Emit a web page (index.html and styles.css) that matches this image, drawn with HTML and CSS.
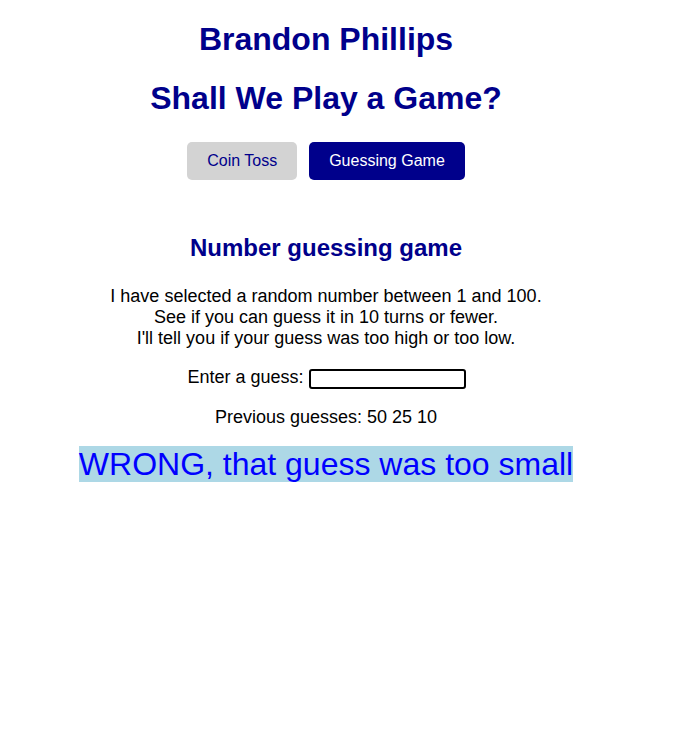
FILE: index.html
```html
<!DOCTYPE html>
<html lang="en">
<head>
<meta charset="utf-8">
<title>Shall We Play a Game?</title>
<link rel="stylesheet" href="styles.css">
</head>
<body>
<div class="page">
  <h1 class="title">Brandon Phillips</h1>
  <h1 class="title">Shall We Play a Game?</h1>
  <nav class="tabs">
    <button class="tab">Coin Toss</button>
    <button class="tab tab-active">Guessing Game</button>
  </nav>
  <section class="game">
    <h2 class="game-title">Number guessing game</h2>
    <p class="intro">I have selected a random number between 1 and 100.<br>See if you can guess it in 10 turns or fewer.<br>I'll tell you if your guess was too high or too low.</p>
    <div class="guess-row">
      <label for="guessField" class="guess-label">Enter a guess:</label>
      <input type="text" id="guessField" class="guess-field">
    </div>
    <p class="guesses">Previous guesses: 50 25 10</p>
    <p class="result"><span class="wrong">WRONG, that guess was too small</span></p>
  </section>
</div>
</body>
</html>
```

FILE: styles.css
```css
html, body {
  background: #fff;
}
body {
  margin: 0 8px 8px;
  font-family: "Liberation Sans", Arial, sans-serif;
  color: #000;
}
.page {
  width: 636px;
  text-align: center;
}
.title {
  font-size: 32px;
  font-weight: bold;
  color: #00008b;
  margin: 21.44px 0;
}
.tabs {
  display: flex;
  justify-content: center;
  gap: 12px;
  margin-top: 25.5px;
}
.tab {
  font-family: "Liberation Sans", Arial, sans-serif;
  font-size: 16px;
  line-height: 18px;
  height: 38px;
  padding: 10px 20px;
  border: none;
  border-radius: 5px;
  background: #d3d3d3;
  color: #00008b;
}
.tab-active {
  background: #00008b;
  color: #fff;
}
.game {
  font-size: 18px;
}
.game-title {
  font-size: 24px;
  font-weight: bold;
  color: #00008b;
  margin: 54px 0 24px;
}
.intro {
  margin: 18px 0;
}
.guess-row {
  display: flex;
  justify-content: center;
  align-items: flex-start;
  gap: 5px;
  margin: 18px 0;
  padding-left: 1px;
}
.guess-field {
  box-sizing: border-box;
  width: 157px;
  height: 20px;
  margin: 2px 0 0;
  border: 2px solid #000;
  border-radius: 3px;
  padding: 1px 2px;
  background: #fff;
}
.guesses {
  margin: 18px 0;
}
.result {
  margin: 18px 0;
  font-size: 32px;
}
.wrong {
  color: #0000ff;
  background: #add8e6;
}
```
